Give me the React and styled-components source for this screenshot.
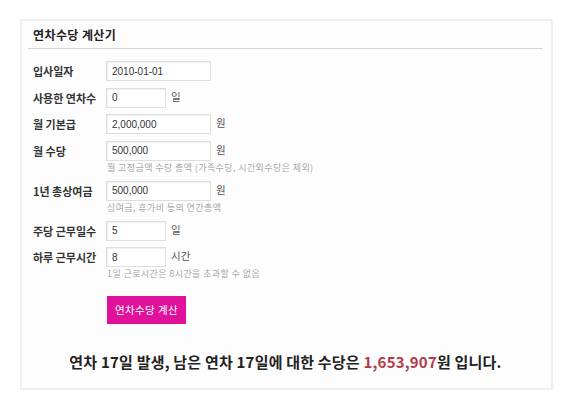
import React from "react";
import styled, { createGlobalStyle } from "styled-components";

const GlobalStyle = createGlobalStyle`
    body {
        margin: 0;
        background: #ffffff;
        font-family: "Noto Sans CJK KR", "Noto Sans", sans-serif;
        color: #333;
    }
`;

const Box = styled.div`
    box-sizing: border-box;
    width: 533px;
    height: 371px;
    margin: 19px 0 0 20px;
    border: 2px solid #efefef;
    background: #fdfdfd;
    padding: 0 8px 0 6px;
`;

const Header = styled.div`
    height: 27px;
    border-bottom: 1px solid #d4d4d4;
    display: flex;
    align-items: center;
    padding-left: 5px;
`;

const Title = styled.h2`
    margin: 0;
    font-size: 12px;
    font-weight: 700;
    color: #222;
    letter-spacing: 0.4px;
`;

const Form = styled.div`
    padding: 12px 0 0 5px;
`;

const Row = styled.div`
    display: flex;
    align-items: flex-start;
    margin-bottom: 6.5px;
`;

const Label = styled.div`
    width: 73px;
    height: 20px;
    line-height: 20px;
    font-size: 11px;
    font-weight: 700;
    letter-spacing: 0;
    color: #333;
    white-space: nowrap;
`;

const Field = styled.div`
    display: flex;
    flex-direction: column;
`;

const InputLine = styled.div`
    display: flex;
    align-items: center;
`;

const Input = styled.input`
    box-sizing: border-box;
    width: ${(props) => (props.short ? "60px" : "105px")};
    height: 20px;
    border: 1px solid #dedede;
    box-shadow: inset 1px 1px 1px #f0f0f0;
    background: #fff;
    padding: 0 5px;
    font-family: "Liberation Sans", Arial, sans-serif;
    font-size: 10px;
    color: #333;
    outline: none;
`;

const Unit = styled.span`
    margin-left: 5px;
    margin-top: -3px;
    font-size: 10.5px;
    color: #555;
`;

const Helper = styled.div`
    font-size: 9px;
    line-height: 13.5px;
    letter-spacing: 0.4px;
    color: #a8a8a8;
    padding-left: 1px;
    white-space: nowrap;
`;

const Button = styled.button`
    display: block;
    width: 79px;
    height: 28px;
    margin: 15px 0 0 74px;
    padding: 0;
    border: none;
    background: #e0129b;
    color: #fff;
    font-family: "Noto Sans CJK KR", sans-serif;
    font-size: 10.5px;
    letter-spacing: 0.4px;
    cursor: pointer;
`;

const Result = styled.p`
    margin: 28px 0 0;
    text-align: center;
    font-size: 15px;
    line-height: 20px;
    font-weight: 700;
    letter-spacing: 0.2px;
    color: #222;
`;

const Amount = styled.span`
    color: #b33a4a;
`;

const fields = [
    { label: "입사일자", value: "2010-01-01" },
    { label: "사용한 연차수", value: "0", unit: "일", short: true },
    { label: "월 기본급", value: "2,000,000", unit: "원" },
    { label: "월 수당", value: "500,000", unit: "원", help: "월 고정금액 수당 총액 (가족수당, 시간외수당은 제외)" },
    { label: "1년 총상여금", value: "500,000", unit: "원", help: "상여금, 휴가비 등의 연간총액" },
    { label: "주당 근무일수", value: "5", unit: "일", short: true },
    { label: "하루 근무시간", value: "8", unit: "시간", short: true, help: "1일 근로시간은 8시간을 초과할 수 없음" },
];

export default function App() {
    return (
        <>
            <GlobalStyle />
            <Box>
                <Header>
                    <Title>연차수당 계산기</Title>
                </Header>
                <Form>
                    {fields.map((item, index) => (
                        <Row key={index}>
                            <Label>{item.label}</Label>
                            <Field>
                                <InputLine>
                                    <Input short={item.short} defaultValue={item.value} />
                                    {item.unit && <Unit>{item.unit}</Unit>}
                                </InputLine>
                                {item.help && <Helper>{item.help}</Helper>}
                            </Field>
                        </Row>
                    ))}
                    <Button>연차수당 계산</Button>
                </Form>
                <Result>
                    연차 17일 발생, 남은 연차 17일에 대한 수당은 <Amount>1,653,907</Amount>원 입니다.
                </Result>
            </Box>
        </>
    );
}
